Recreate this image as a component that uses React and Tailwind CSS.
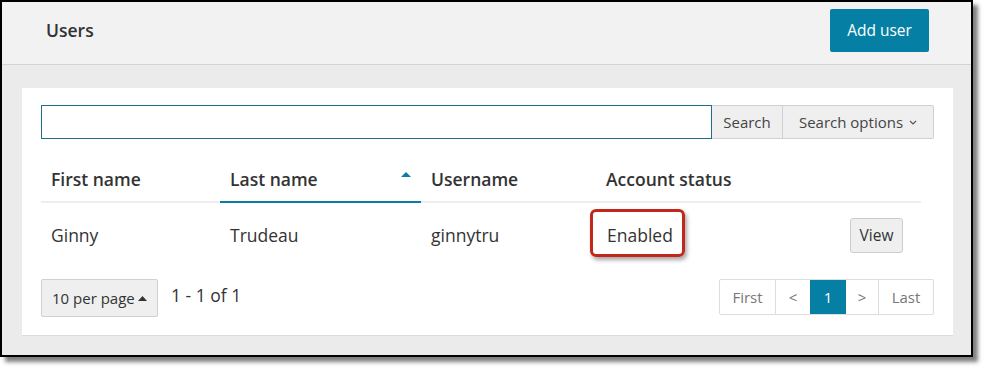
import React from 'react';

const teal = 'bg-[#0580a4]';

function Caret({ className = '' }) {
  return (
    <svg width="10" height="5" viewBox="0 0 10 5" className={className}>
      <path d="M0 5 L5 0 L10 5 Z" fill="currentColor" />
    </svg>
  );
}

export default function App() {
  return (
    <div className="min-h-screen bg-white text-[#333]" style={{ fontFamily: '"Open Sans", "Noto Sans", sans-serif' }}>
      <div className="w-[973px] h-[357px] border-2 border-black flex flex-col bg-[#ebebeb] shadow-[5px_5px_4px_rgba(0,0,0,0.5)]">
        {/* Header */}
        <div className="h-[63px] shrink-0 bg-[#f2f2f2] border-b border-[#d4d4d4] flex items-start justify-between pl-[44px] pr-[42px]">
          <h1 className="text-[17.5px] font-semibold mt-[16px] leading-[24px] text-[#333]">Users</h1>
          <button className={`${teal} text-white text-[15.5px] h-[43px] w-[99px] mt-[7px] rounded-[2px]`}>Add user</button>
        </div>

        {/* Body */}
        <div className="flex-1 pt-[23px] pl-[20px] pr-[18px]">
          <div className="bg-white h-[248px] pt-[17px] pl-[19px] pr-[19px] border-b border-[#dcdcdc]">
            {/* Search */}
            <div className="flex h-[34px]">
              <input className="flex-1 border border-[#1d6f8a] outline-none px-2 text-[15px]" />
              <button className="w-[71px] bg-[#efefef] border border-l-0 border-[#d0d0d0] text-[15px] text-[#444]">Search</button>
              <button className="w-[151px] bg-[#efefef] border border-l-0 border-[#d0d0d0] text-[15px] text-[#444] flex items-center justify-center gap-[6px] rounded-r-[2px]">
                Search options
                <svg width="8" height="5" viewBox="0 0 8 5">
                  <path d="M1 1 L4 4 L7 1" fill="none" stroke="#555" strokeWidth="1.2" />
                </svg>
              </button>
            </div>

            {/* Table */}
            <table className="w-[880px] mt-[19px] table-fixed border-collapse">
              <colgroup>
                <col className="w-[179px]" />
                <col className="w-[201px]" />
                <col className="w-[175px]" />
                <col className="w-[175px]" />
                <col className="w-[150px]" />
              </colgroup>
              <thead>
                <tr className="h-[44px] text-left text-[17.5px] font-semibold">
                  <th className="pl-[10px] font-semibold border-b-2 border-[#eeeeee]">First name</th>
                  <th className="pl-[10px] font-semibold border-b-2 border-[#0580a4] relative">
                    Last name
                    <Caret className="absolute right-[10px] top-[14px] text-[#0580a4]" />
                  </th>
                  <th className="pl-[10px] font-semibold border-b-2 border-[#eeeeee]">Username</th>
                  <th className="pl-[10px] font-semibold border-b-2 border-[#eeeeee]">Account status</th>
                  <th className="border-b-2 border-[#eeeeee]"></th>
                </tr>
              </thead>
              <tbody>
                <tr className="h-[66px] text-[17.5px]">
                  <td className="pl-[10px]">Ginny</td>
                  <td className="pl-[10px]">Trudeau</td>
                  <td className="pl-[10px]">ginnytru</td>
                  <td className="pl-[11px]">
                    <span className="relative inline-block">
                      Enabled
                      <span className="absolute -left-[17px] -right-[12px] -top-[13px] -bottom-[8px] border-[3px] border-[#c1271b] rounded-[6px] shadow-[2px_3px_4px_rgba(0,0,0,0.35)]"></span>
                    </span>
                  </td>
                  <td className="pr-[18px] text-right">
                    <button className="bg-[#efefef] border border-[#cccccc] rounded-[3px] h-[35px] w-[53px] text-[15.5px] text-[#333]">View</button>
                  </td>
                </tr>
              </tbody>
            </table>

            {/* Footer */}
            <div className="flex items-start justify-between mt-[11px]">
              <div className="flex items-center">
                <button className="h-[38px] w-[117px] bg-[#efefef] border border-[#d0d0d0] rounded-[2px] text-[15px] text-[#333] flex items-center pl-[10px] gap-[3px]">
                  10 per page
                  <svg width="9" height="5" viewBox="0 0 9 5">
                    <path d="M0 5 L4.5 0 L9 5 Z" fill="#333" />
                  </svg>
                </button>
                <span className="ml-[13px] text-[17.5px] text-[#333] -mt-[6px]">1 - 1 of 1</span>
              </div>
              <div className="flex h-[36px] border border-[#dddddd] rounded-[2px] text-[15px] text-[#777]">
                <span className="w-[56px] flex items-center justify-center border-r border-[#dddddd]">First</span>
                <span className="w-[34px] flex items-center justify-center">&lt;</span>
                <span className={`w-[36px] flex items-center justify-center ${teal} text-white`}>1</span>
                <span className="w-[33px] flex items-center justify-center border-r border-[#dddddd]">&gt;</span>
                <span className="w-[54px] flex items-center justify-center">Last</span>
              </div>
            </div>
          </div>
        </div>
      </div>
    </div>
  );
}
